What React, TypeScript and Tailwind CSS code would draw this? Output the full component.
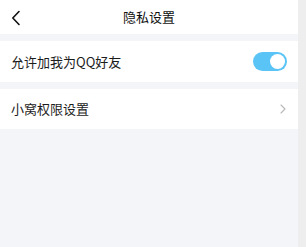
export default function App() {
  return (
    <div
      className="flex h-[247px] w-[306px] overflow-hidden"
      style={{ fontFamily: '"Noto Sans CJK SC", "Noto Sans", sans-serif' }}
    >
      <div className="flex w-[298px] flex-col bg-[#f4f5f9]">
        <div className="relative flex h-[34px] items-center justify-center bg-white">
          <svg
            className="absolute left-[10px] top-[10px]"
            width="12"
            height="16"
            viewBox="0 0 12 16"
          >
            <polyline
              points="9,1.5 2.8,8 9,14.5"
              fill="none"
              stroke="#111"
              strokeWidth="1.6"
              strokeLinecap="round"
              strokeLinejoin="round"
            />
          </svg>
          <span className="text-[13px] text-[#111]">隐私设置</span>
        </div>
        <div className="mt-[7px] flex h-[41px] items-center justify-between bg-white pl-[11px] pr-[11px]">
          <span className="text-[13px] text-[#1c1c1c]">允许加我为QQ好友</span>
          <div className="flex h-[19px] w-[34px] items-center justify-end rounded-full bg-[#5ac4f7] pr-[2px]">
            <div className="h-[15px] w-[15px] rounded-full bg-white" />
          </div>
        </div>
        <div className="mt-[7px] flex h-[40px] items-center justify-between bg-white pl-[11px] pr-[12px]">
          <span className="text-[13px] text-[#1c1c1c]">小窝权限设置</span>
          <svg width="6" height="10" viewBox="0 0 6 10">
            <polyline
              points="1,1 5,5 1,9"
              fill="none"
              stroke="#b8b8bc"
              strokeWidth="1.1"
              strokeLinecap="round"
              strokeLinejoin="round"
            />
          </svg>
        </div>
      </div>
      <div className="w-[8px] bg-[#eeeeee]" />
    </div>
  );
}
